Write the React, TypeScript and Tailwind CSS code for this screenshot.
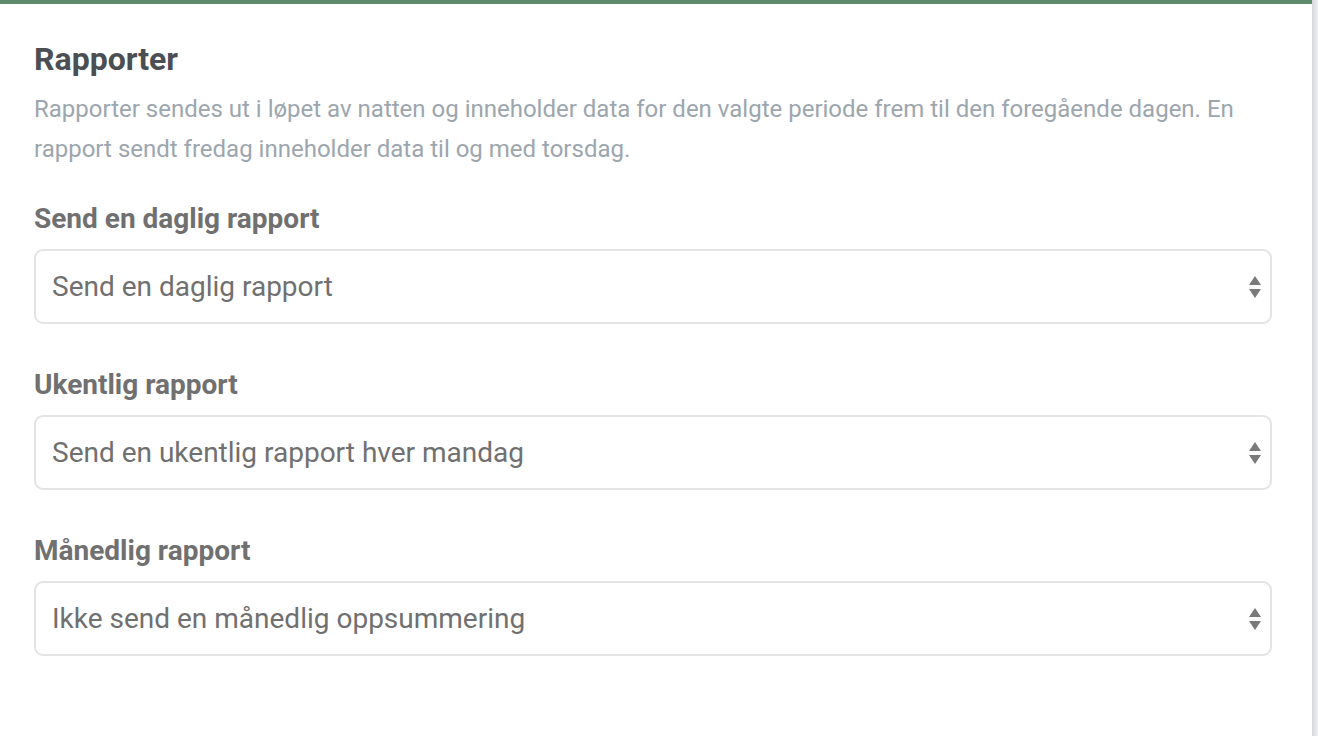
import React from "react";

function Arrows() {
  return (
    <svg width="14" height="26" viewBox="0 0 14 26" className="shrink-0">
      <path d="M7 2 L13 11 L1 11 Z" fill="#7a7a7a" />
      <path d="M1 15 L13 15 L7 24 Z" fill="#7a7a7a" />
    </svg>
  );
}

function Field({ label, value }: { label: string; value: string }) {
  return (
    <div className="flex flex-col">
      <div className="text-[28px] leading-[32px] font-bold text-[#707070]">{label}</div>
      <div className="mt-[14px] h-[75px] rounded-[9px] border-2 border-[#e4e4e4] flex items-center justify-between pl-[16px] pr-[8px]">
        <span className="text-[28px] text-[#707070]">{value}</span>
        <Arrows />
      </div>
    </div>
  );
}

export default function App() {
  return (
    <div className="w-[1318px] h-[736px] bg-white flex" style={{ fontFamily: "Roboto, 'Liberation Sans', sans-serif" }}>
      <div className="w-[1312px] h-[731px] bg-white border-t-[4px] border-[#5e8a6c] rounded-br-[6px] px-[34px] pt-[35px] flex flex-col">
        <h1 className="text-[32px] leading-[40px] font-bold text-[#4b4e53]">Rapporter</h1>
        <p className="mt-[10px] text-[24px] leading-[40px] text-[#9ca6ae]">
          Rapporter sendes ut i løpet av natten og inneholder data for den valgte periode frem til den foregående dagen. En rapport sendt fredag inneholder data til og med torsdag.
        </p>
        <div className="mt-[34px] flex flex-col gap-[45px] w-[1238px]">
          <Field label="Send en daglig rapport" value="Send en daglig rapport" />
          <Field label="Ukentlig rapport" value="Send en ukentlig rapport hver mandag" />
          <Field label="Månedlig rapport" value="Ikke send en månedlig oppsummering" />
        </div>
      </div>
      <div className="w-[6px] h-full bg-gradient-to-r from-[#d4d8db] to-[#eef0f2]" />
    </div>
  );
}
